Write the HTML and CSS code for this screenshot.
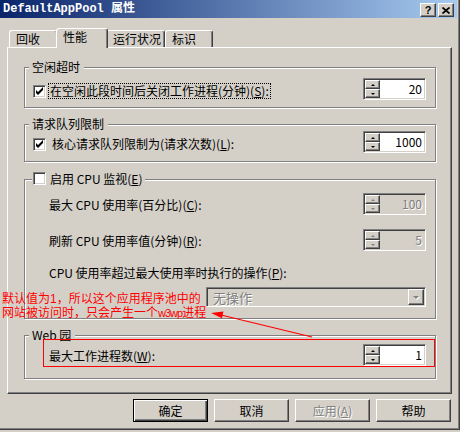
FILE: index.html
```html
<!DOCTYPE html>
<html lang="zh-CN">
<head>
<meta charset="utf-8">
<title>DefaultAppPool 属性</title>
<link rel="stylesheet" href="styles.css">
</head>
<body>
<div class="window">
  <div class="titlebar">
    <span class="title">DefaultAppPool 属性</span>
    <div class="caption-btns">
      <span class="cap-btn">?</span>
      <span class="cap-btn"><svg width="8" height="7" viewBox="0 0 8 7"><path d="M0.5 0.5L7.5 6.5M7.5 0.5L0.5 6.5" stroke="#000" stroke-width="1.7" fill="none"/></svg></span>
    </div>
  </div>

  <div class="tabs">
    <div class="tab tab-1">回收</div>
    <div class="tab tab-2 sel">性能</div>
    <div class="tab tab-3">运行状况</div>
    <div class="tab tab-4">标识</div>
  </div>

  <div class="page">
    <fieldset class="group g1">
      <legend class="legend">空闲超时</legend>
      <div class="gbody gbody-chk">
        <div class="row">
          <span class="chk"><svg width="11" height="11" viewBox="0 0 11 11"><polygon points="2,4 4,6 9,1 9,4 4,9 2,7" fill="#000"/></svg></span>
          <span class="lbl focus">在空闲此段时间后关闭工作进程(分钟)(<u>S</u>):</span>
          <span class="spin"><span class="spin-btns"><span class="sb up"></span><span class="sb down"></span></span><span class="spin-val">20</span></span>
        </div>
      </div>
    </fieldset>

    <fieldset class="group g2">
      <legend class="legend">请求队列限制</legend>
      <div class="gbody gbody-chk">
        <div class="row">
          <span class="chk"><svg width="11" height="11" viewBox="0 0 11 11"><polygon points="2,4 4,6 9,1 9,4 4,9 2,7" fill="#000"/></svg></span>
          <span class="lbl">核心请求队列限制为(请求次数)(<u>L</u>):</span>
          <span class="spin"><span class="spin-btns"><span class="sb up"></span><span class="sb down"></span></span><span class="spin-val">1000</span></span>
        </div>
      </div>
    </fieldset>

    <fieldset class="group g3">
      <legend class="legend legend-chk"><span class="legend-in"><span class="chk"></span><span>启用 CPU 监视(<u>E</u>)</span></span></legend>
      <div class="gbody gbody-ind">
        <div class="row">
          <span>最大 CPU 使用率(百分比)(<u>C</u>):</span>
          <span class="spin dis"><span class="spin-btns"><span class="sb up"></span><span class="sb down"></span></span><span class="spin-val">100</span></span>
        </div>
        <div class="row row-gap">
          <span>刷新 CPU 使用率值(分钟)(<u>R</u>):</span>
          <span class="spin dis"><span class="spin-btns"><span class="sb up"></span><span class="sb down"></span></span><span class="spin-val">5</span></span>
        </div>
        <div class="text-row">CPU 使用率超过最大使用率时执行的操作(<u>P</u>):</div>
        <div class="select-row">
          <span class="select"><span class="select-val">无操作</span><span class="select-btn"></span></span>
        </div>
      </div>
    </fieldset>

    <fieldset class="group g4">
      <legend class="legend">Web 园</legend>
      <div class="gbody gbody-ind">
        <div class="row">
          <span>最大工作进程数(<u>W</u>):</span>
          <span class="spin"><span class="spin-btns"><span class="sb up"></span><span class="sb down"></span></span><span class="spin-val">1</span></span>
        </div>
      </div>
    </fieldset>
  </div>

  <div class="buttons">
    <span class="btn default">确定</span>
    <span class="btn">取消</span>
    <span class="btn dis">应用(<u>A</u>)</span>
    <span class="btn">帮助</span>
  </div>

  <div class="note">
    <div class="note-line">默认值为1，所以这个应用程序池中的</div>
    <div class="note-line">网站被访问时，只会产生一个<span class="latin">w3wp</span>进程</div>
  </div>
  <svg class="arrow" width="460" height="432" viewBox="0 0 460 432">
    <line x1="221" y1="315" x2="312" y2="337" stroke="#f00" stroke-width="1.2"/>
    <polygon points="211,313 223.4,311.5 222,318.3" fill="#f00"/>
  </svg>
  <div class="mark"></div>
</div>
</body>
</html>
```

FILE: styles.css
```css
* { box-sizing: border-box; }
html, body { margin: 0; padding: 0; }
body {
  width: 460px;
  height: 432px;
  overflow: hidden;
  background: #d4d0c8;
  font-family: "Noto Sans CJK SC", sans-serif;
  font-size: 12px;
  color: #000;
}
u { text-decoration: underline; text-underline-offset: 1px; }

.window {
  position: relative;
  width: 460px;
  height: 430px;
  background: #d4d0c8;
  box-shadow: inset -1px -1px #404040, inset -2px -2px #808080;
}

/* title bar */
.titlebar {
  display: flex;
  align-items: flex-start;
  width: 457px;
  height: 18px;
  padding: 0 3px;
  background: linear-gradient(to right, #0a246a, #a6caf0);
}
.title {
  flex: 1;
  color: #fff;
  font-family: "Liberation Mono", "Noto Sans CJK SC", monospace;
  font-weight: bold;
  font-size: 12px;
  line-height: 19px;
  white-space: nowrap;
}
.caption-btns { display: flex; gap: 2px; margin-top: 3px; }
.cap-btn {
  width: 16px;
  height: 14px;
  display: flex;
  align-items: center;
  justify-content: center;
  background: #d4d0c8;
  border: 1px solid;
  border-color: #fff #404040 #404040 #fff;
  box-shadow: inset -1px -1px #808080;
  font: bold 11px/1 "Liberation Sans", sans-serif;
}

/* tabs */
.tabs {
  display: flex;
  align-items: flex-end;
  height: 19px;
  margin-top: 10px;
  padding-left: 9px;
}
.tab {
  height: 17px;
  padding-left: 6px;
  border: 1px solid;
  border-bottom: 0;
  border-color: #fff #404040 transparent #fff;
  border-radius: 3px 3px 0 0;
  box-shadow: inset -1px 0 #808080;
  line-height: 16px;
  white-space: nowrap;
}
.tab.sel {
  position: relative;
  z-index: 1;
  height: 20px;
  margin: 0 -2px -1px;
  background: #d4d0c8;
}
.tab-1 { width: 49px; }
.tab-2 { width: 52px; }
.tab-3 { width: 59px; }
.tab-4 { width: 48px; }

/* tab page */
.page {
  display: flex;
  flex-direction: column;
  gap: 10px;
  margin-left: 7px;
  width: 445px;
  height: 347px;
  padding: 13px 15px 0 16px;
  border: 1px solid;
  border-color: #fff #404040 #404040 #fff;
  box-shadow: inset -1px -1px #808080;
}

/* group boxes */
.group {
  margin: 0;
  min-width: 0;
  padding-left: 0;
  padding-right: 0;
  border: 1px solid #808080;
  box-shadow: inset 1px 1px #fff, 1px 1px #fff;
}
.legend {
  margin-left: 4px;
  padding: 0 4px 0 3px;
  line-height: 12px;
  background: #d4d0c8;
}
.legend-chk { margin-left: 7px; padding: 0 3px 0 1px; line-height: 13px; }
.legend-in { display: inline-flex; align-items: center; gap: 4px; height: 13px; }

.g1 { padding-top: 5px; padding-bottom: 7px; }
.g2 { padding-top: 1px; padding-bottom: 8px; }
.g3 { padding-top: 7px; padding-bottom: 11px; }
.g4 { padding-top: 3px; padding-bottom: 12px; }

.gbody-chk { padding: 0 9px 0 8px; }
.gbody-ind { padding: 0 9px 0 24px; }

.row { display: flex; align-items: center; height: 22px; }
.row-gap { margin-top: 14px; }
.text-row { margin-top: 15px; line-height: 14px; white-space: nowrap; }
.select-row { display: flex; margin-top: 7px; }

.chk {
  flex: none;
  display: block;
  width: 13px;
  height: 13px;
  background: #fff;
  border: 1px solid;
  border-color: #808080 #fff #fff #808080;
  box-shadow: inset 1px 1px #404040, inset -1px -1px #d4d0c8;
}
.chk svg { display: block; }
.row > .chk { margin: 4px 2px 0 0; }

.lbl {
  margin-top: 4px;
  padding: 1px;
  border: 1px solid transparent;
  line-height: 12px;
  white-space: nowrap;
}
.lbl.focus { border: 1px dotted #000; }
.row > .lbl:not(.focus) { margin-left: 2px; }

/* spinner */
.spin {
  margin-left: auto;
  flex: none;
  display: flex;
  width: 63px;
  height: 22px;
  padding: 1px;
  background: #fff;
  border: 1px solid;
  border-color: #808080 #fff #fff #808080;
  box-shadow: inset 1px 1px #404040, inset -1px -1px #d4d0c8;
}
.spin-btns { display: flex; flex-direction: column; width: 15px; }
.sb {
  flex: 1;
  display: flex;
  align-items: center;
  justify-content: center;
  background: #d4d0c8;
  border: 1px solid;
  border-color: #fff #404040 #404040 #fff;
  box-shadow: inset -1px -1px #808080;
}
.sb::after {
  content: "";
  border-left: 2px solid transparent;
  border-right: 2px solid transparent;
}
.sb.up::after { border-bottom: 2px solid #000; }
.sb.down::after { border-top: 2px solid #000; }
.spin-val {
  flex: 1;
  padding-right: 2px;
  text-align: right;
  line-height: 18px;
  background: #fff;
}
.spin.dis { background: #d4d0c8; }
.spin.dis .spin-val { background: #d4d0c8; color: #808080; text-shadow: 1px 1px #fff; }
.spin.dis .sb.up::after { border-bottom-color: #808080; }
.spin.dis .sb.down::after { border-top-color: #808080; }

/* combo box */
.select {
  margin-left: auto;
  display: flex;
  width: 220px;
  height: 20px;
  padding: 1px;
  border: 1px solid;
  border-color: #808080 #fff #fff #808080;
  box-shadow: inset 1px 1px #404040, inset -1px -1px #d4d0c8;
}
.select-val {
  flex: 1;
  padding-left: 5px;
  line-height: 18px;
  font-size: 13px;
  color: #808080;
  text-shadow: 1px 1px #fff;
}
.select-btn {
  width: 16px;
  display: flex;
  align-items: center;
  justify-content: center;
  background: #d4d0c8;
  border: 1px solid;
  border-color: #fff #404040 #404040 #fff;
  box-shadow: inset -1px -1px #808080;
}
.select-btn::after {
  content: "";
  border-left: 3px solid transparent;
  border-right: 3px solid transparent;
  border-top: 3px solid #808080;
  filter: drop-shadow(1px 1px 0 #fff);
}

/* dialog buttons */
.buttons {
  display: flex;
  justify-content: flex-end;
  gap: 6px;
  margin-top: 5px;
  padding-right: 9px;
}
.btn {
  width: 75px;
  height: 23px;
  display: flex;
  align-items: center;
  justify-content: center;
  background: #d4d0c8;
  border: 1px solid;
  border-color: #fff #404040 #404040 #fff;
  box-shadow: inset -1px -1px #808080;
  white-space: nowrap;
}
.btn.default {
  border-color: #000;
  box-shadow: inset 1px 1px #fff, inset -1px -1px #404040, inset -2px -2px #808080;
}
.btn.dis { color: #808080; text-shadow: 1px 1px #fff; }

/* red annotation overlay */
.note {
  position: absolute;
  left: 2px;
  top: 292px;
  color: #f00;
  font-family: "Liberation Sans", "Noto Sans CJK SC", sans-serif;
  white-space: nowrap;
}
.note-line { height: 14px; line-height: 14px; }
.note .latin { letter-spacing: -1px; font-size: 11px; }
.arrow { position: absolute; left: 0; top: 0; pointer-events: none; }
.mark {
  position: absolute;
  left: 43px;
  top: 339px;
  width: 392px;
  height: 28px;
  border: 1px solid #f00;
}
```
